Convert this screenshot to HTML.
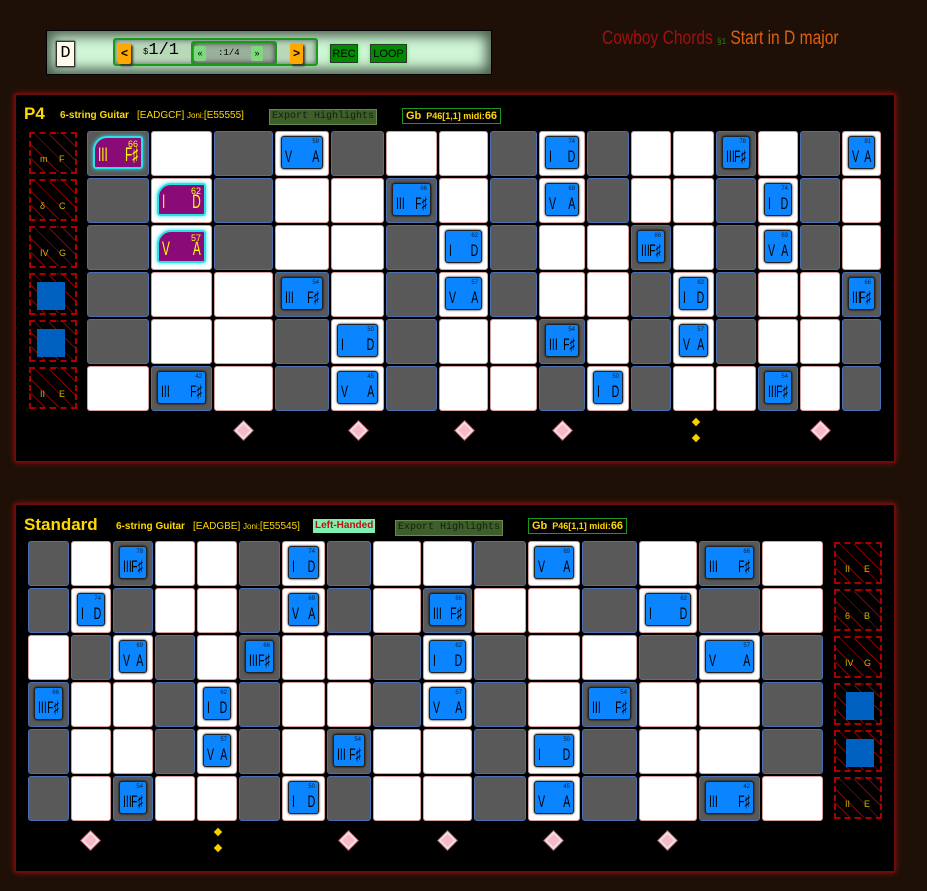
<!DOCTYPE html>
<html><head><meta charset="utf-8"><style>
body{margin:0;width:927px;height:891px;background:#1e1006;position:relative;overflow:hidden;font-family:"Liberation Sans",sans-serif}
.abs{position:absolute}
.bar{left:46px;top:30px;width:446px;height:45px;background:#cff5d6;box-shadow:inset 0 0 12px 5px #4a5e4c;border:1px solid #000;box-sizing:border-box}
.panel{position:absolute;left:14px;width:882px;height:370px;background:#000;border:2px solid #6a0c0c;box-sizing:border-box;border-radius:3px;box-shadow:0 0 6px #8a1010}
.grid{position:absolute;display:grid;grid-auto-rows:47px}
.c{margin:1px;border-radius:3px;position:relative;box-sizing:border-box}
.g{background:#595959;border:1px solid #4a6fb0}
.w{background:#fff;border:1px solid #d9a0a0}
.k{position:absolute;left:5px;right:5px;top:4px;bottom:6px;background:#0a84ff;border:1px solid #222;border-radius:3px;box-shadow:0 0 2px #000;color:#000}
.k b{position:absolute;right:3px;top:2px;font-size:6px;font-weight:normal;color:#123}
.k span{position:absolute;bottom:3px;font-size:17px;line-height:17px;transform:scaleX(0.62)}
.k span:first-of-type{left:3px;transform-origin:left bottom}.k span:last-of-type{right:3px;transform-origin:right bottom}
.p{background:#8a0a78;border:2px solid #2ce0e8;border-top-left-radius:14px;box-shadow:0 0 4px #2ce0e8;color:#ff0}
.p b{color:#ff0;font-size:9px;top:1px}.p span{font-size:19px;line-height:19px;bottom:2px}
.lab{position:absolute;width:48px;height:42px;box-sizing:border-box;border:2px dashed #a00;background:repeating-linear-gradient(45deg,#000 0 9px,#8a0000 9px 10px);font-size:9px;color:#c8b400}
.lab .a{position:absolute;left:9px;bottom:8px}.lab .b{position:absolute;left:28px;bottom:8px}
.lab .bl{position:absolute;left:6px;top:7px;width:28px;height:28px;background:#0060c0;color:#113}
.dm{position:absolute;width:9px;height:9px;background:#f8b8c8;border:2px solid #f0e0e0;transform:rotate(45deg);box-shadow:0 0 0 1px #a05060}
.yd{position:absolute;width:6px;height:6px;background:#f8d000;transform:rotate(45deg)}
.h{position:absolute;color:#ffd800;font-weight:bold;font-size:11px}
.exp{position:absolute;background:#3e5e2a;border:1px solid #6a8a4a;font-family:"Liberation Mono",monospace;font-size:10px;color:#102010;height:14px;line-height:14px;padding:0 2px}
.gb{position:absolute;border:1px solid #1a9a1a;color:#ffd800;font-weight:bold;font-size:9px;height:14px;line-height:14px;padding:0 3px}
</style></head><body>

<div class="abs bar"></div>
<div class="abs" style="left:56px;top:41px;width:17px;height:24px;background:#fffbe8;border:1px solid #333;box-shadow:0 0 2px #000;font-family:'Liberation Mono',monospace;font-size:17px;line-height:24px;text-align:center">D</div>
<div class="abs" style="left:113px;top:38px;width:205px;height:28px;background:#b8d8b8;border:2px solid #1a9a1a;border-radius:3px;box-sizing:border-box;box-shadow:inset 0 0 6px #556"></div>
<div class="abs" style="left:118px;top:43px;width:13px;height:21px;background:#ffa800;border-radius:2px;font-size:12px;font-weight:bold;text-align:center;line-height:20px;box-shadow:2px 2px 2px #333">&lt;</div>
<div class="abs" style="left:143px;top:41px;font-family:'Liberation Mono',monospace;font-size:17px"><span style="font-size:9px">$</span>1/1</div>
<div class="abs" style="left:191px;top:41px;width:86px;height:24px;background:#9ab09a;border:2px solid #1a9a1a;border-radius:3px;box-sizing:border-box;box-shadow:inset 0 0 6px #333"></div>
<div class="abs" style="left:194px;top:46px;width:12px;height:15px;background:#7ed87e;border-radius:2px;font-size:9px;text-align:center;line-height:15px">«</div>
<div class="abs" style="left:218px;top:48px;font-family:'Liberation Mono',monospace;font-size:9px">:1/4</div>
<div class="abs" style="left:251px;top:46px;width:12px;height:15px;background:#7ed87e;border-radius:2px;font-size:9px;text-align:center;line-height:15px">»</div>
<div class="abs" style="left:290px;top:43px;width:13px;height:21px;background:#ffa800;border-radius:2px;font-size:12px;font-weight:bold;text-align:center;line-height:20px;box-shadow:2px 2px 2px #333">&gt;</div>
<div class="abs" style="left:330px;top:44px;width:28px;height:19px;background:#008a00;border:1px solid #333;box-shadow:0 0 4px #4f4;font-size:11px;text-align:center;line-height:19px;box-sizing:border-box">REC</div>
<div class="abs" style="left:370px;top:44px;width:37px;height:19px;background:#008a00;border:1px solid #333;box-shadow:0 0 4px #4f4;font-size:11px;text-align:center;line-height:19px;box-sizing:border-box">LOOP</div>

<div class="abs" style="left:602px;top:28px;font-size:19px;color:#a01010;transform:scaleX(0.82);transform-origin:left;white-space:nowrap">Cowboy Chords <span style="font-size:9px;color:#3a7a20;font-family:'Liberation Mono',monospace">§1</span> <span style="color:#e06010">Start in D major</span></div>

<!-- P4 PANEL -->
<div class="panel" style="top:93px"></div>
<div class="h" style="left:24px;top:104px;font-size:17px">P4</div>
<div class="h" style="left:60px;top:110px;font-size:10px">6-string Guitar</div>
<div class="h" style="left:137px;top:110px;font-size:10px;font-weight:normal;color:#ffd800">[EADGCF] <span style="font-size:8px">Joni:</span>[E55555]</div>
<div class="exp" style="left:269px;top:109px">Export Highlights</div>
<div class="gb" style="left:402px;top:108px"><span style="font-size:11px">Gb</span> &nbsp;P46[1,1] midi:<span style="font-size:11px">66</span></div>

<div class="lab" style="left:29px;top:132px"><span class="a">m</span><span class="b">F</span></div>
<div class="lab" style="left:29px;top:179px"><span class="a">δ</span><span class="b">C</span></div>
<div class="lab" style="left:29px;top:226px"><span class="a">IV</span><span class="b">G</span></div>
<div class="lab" style="left:29px;top:273px"><div class="bl"></div></div>
<div class="lab" style="left:29px;top:320px"><div class="bl"></div></div>
<div class="lab" style="left:29px;top:367px"><span class="a">II</span><span class="b">E</span></div>

<div class="grid" style="left:86px;top:130px;grid-template-columns:64px 63px 61px 56px 55px 53px 51px 49px 48px 44px 42px 43px 42px 42px 42px 41px">
<div class="c g"><div class="k p"><b>66</b><span>III</span><span>F♯</span></div></div><div class="c w"></div><div class="c g"></div><div class="c w"><div class="k"><b>59</b><span>V</span><span>A</span></div></div><div class="c g"></div><div class="c w"></div><div class="c w"></div><div class="c g"></div><div class="c w"><div class="k"><b>74</b><span>I</span><span>D</span></div></div><div class="c g"></div><div class="c w"></div><div class="c w"></div><div class="c g"><div class="k"><b>78</b><span>III</span><span>F♯</span></div></div><div class="c w"></div><div class="c g"></div><div class="c w"><div class="k"><b>81</b><span>V</span><span>A</span></div></div>
<div class="c g"></div><div class="c w"><div class="k p"><b>62</b><span>I</span><span>D</span></div></div><div class="c g"></div><div class="c w"></div><div class="c w"></div><div class="c g"><div class="k"><b>66</b><span>III</span><span>F♯</span></div></div><div class="c w"></div><div class="c g"></div><div class="c w"><div class="k"><b>69</b><span>V</span><span>A</span></div></div><div class="c g"></div><div class="c w"></div><div class="c w"></div><div class="c g"></div><div class="c w"><div class="k"><b>74</b><span>I</span><span>D</span></div></div><div class="c g"></div><div class="c w"></div>
<div class="c g"></div><div class="c w"><div class="k p"><b>57</b><span>V</span><span>A</span></div></div><div class="c g"></div><div class="c w"></div><div class="c w"></div><div class="c g"></div><div class="c w"><div class="k"><b>62</b><span>I</span><span>D</span></div></div><div class="c g"></div><div class="c w"></div><div class="c w"></div><div class="c g"><div class="k"><b>66</b><span>III</span><span>F♯</span></div></div><div class="c w"></div><div class="c g"></div><div class="c w"><div class="k"><b>69</b><span>V</span><span>A</span></div></div><div class="c g"></div><div class="c w"></div>
<div class="c g"></div><div class="c w"></div><div class="c w"></div><div class="c g"><div class="k"><b>54</b><span>III</span><span>F♯</span></div></div><div class="c w"></div><div class="c g"></div><div class="c w"><div class="k"><b>57</b><span>V</span><span>A</span></div></div><div class="c g"></div><div class="c w"></div><div class="c w"></div><div class="c g"></div><div class="c w"><div class="k"><b>62</b><span>I</span><span>D</span></div></div><div class="c g"></div><div class="c w"></div><div class="c w"></div><div class="c g"><div class="k"><b>66</b><span>III</span><span>F♯</span></div></div>
<div class="c g"></div><div class="c w"></div><div class="c w"></div><div class="c g"></div><div class="c w"><div class="k"><b>50</b><span>I</span><span>D</span></div></div><div class="c g"></div><div class="c w"></div><div class="c w"></div><div class="c g"><div class="k"><b>54</b><span>III</span><span>F♯</span></div></div><div class="c w"></div><div class="c g"></div><div class="c w"><div class="k"><b>57</b><span>V</span><span>A</span></div></div><div class="c g"></div><div class="c w"></div><div class="c w"></div><div class="c g"></div>
<div class="c w"></div><div class="c g"><div class="k"><b>42</b><span>III</span><span>F♯</span></div></div><div class="c w"></div><div class="c g"></div><div class="c w"><div class="k"><b>45</b><span>V</span><span>A</span></div></div><div class="c g"></div><div class="c w"></div><div class="c w"></div><div class="c g"></div><div class="c w"><div class="k"><b>50</b><span>I</span><span>D</span></div></div><div class="c g"></div><div class="c w"></div><div class="c w"></div><div class="c g"><div class="k"><b>54</b><span>III</span><span>F♯</span></div></div><div class="c w"></div><div class="c g"></div>
</div>
<div class="dm" style="left:237px;top:424px"></div><div class="dm" style="left:352px;top:424px"></div><div class="dm" style="left:458px;top:424px"></div><div class="dm" style="left:556px;top:424px"></div><div class="dm" style="left:814px;top:424px"></div>
<div class="yd" style="left:693px;top:419px"></div><div class="yd" style="left:693px;top:435px"></div>

<!-- STANDARD PANEL -->
<div class="panel" style="top:503px"></div>
<div class="h" style="left:24px;top:515px;font-size:17px">Standard</div>
<div class="h" style="left:116px;top:521px;font-size:10px">6-string Guitar</div>
<div class="h" style="left:193px;top:521px;font-size:10px;font-weight:normal">[EADGBE] <span style="font-size:8px">Joni:</span>[E55545]</div>
<div class="abs" style="left:313px;top:519px;background:#7ef0b0;color:#c01010;font-size:10px;font-weight:bold;padding:0 2px;height:14px;line-height:14px">Left-Handed</div>
<div class="exp" style="left:395px;top:520px">Export Highlights</div>
<div class="gb" style="left:528px;top:518px"><span style="font-size:11px">Gb</span> &nbsp;P46[1,1] midi:<span style="font-size:11px">66</span></div>

<div class="grid" style="left:27px;top:540px;grid-template-columns:43px 42px 42px 42px 42px 43px 45px 46px 50px 51px 54px 54px 57px 60px 63px 63px">
<div class="c g"></div><div class="c w"></div><div class="c g"><div class="k"><b>78</b><span>III</span><span>F♯</span></div></div><div class="c w"></div><div class="c w"></div><div class="c g"></div><div class="c w"><div class="k"><b>74</b><span>I</span><span>D</span></div></div><div class="c g"></div><div class="c w"></div><div class="c w"></div><div class="c g"></div><div class="c w"><div class="k"><b>69</b><span>V</span><span>A</span></div></div><div class="c g"></div><div class="c w"></div><div class="c g"><div class="k"><b>66</b><span>III</span><span>F♯</span></div></div><div class="c w"></div>
<div class="c g"></div><div class="c w"><div class="k"><b>74</b><span>I</span><span>D</span></div></div><div class="c g"></div><div class="c w"></div><div class="c w"></div><div class="c g"></div><div class="c w"><div class="k"><b>69</b><span>V</span><span>A</span></div></div><div class="c g"></div><div class="c w"></div><div class="c g"><div class="k"><b>66</b><span>III</span><span>F♯</span></div></div><div class="c w"></div><div class="c w"></div><div class="c g"></div><div class="c w"><div class="k"><b>62</b><span>I</span><span>D</span></div></div><div class="c g"></div><div class="c w"></div>
<div class="c w"></div><div class="c g"></div><div class="c w"><div class="k"><b>69</b><span>V</span><span>A</span></div></div><div class="c g"></div><div class="c w"></div><div class="c g"><div class="k"><b>66</b><span>III</span><span>F♯</span></div></div><div class="c w"></div><div class="c w"></div><div class="c g"></div><div class="c w"><div class="k"><b>62</b><span>I</span><span>D</span></div></div><div class="c g"></div><div class="c w"></div><div class="c w"></div><div class="c g"></div><div class="c w"><div class="k"><b>57</b><span>V</span><span>A</span></div></div><div class="c g"></div>
<div class="c g"><div class="k"><b>66</b><span>III</span><span>F♯</span></div></div><div class="c w"></div><div class="c w"></div><div class="c g"></div><div class="c w"><div class="k"><b>62</b><span>I</span><span>D</span></div></div><div class="c g"></div><div class="c w"></div><div class="c w"></div><div class="c g"></div><div class="c w"><div class="k"><b>57</b><span>V</span><span>A</span></div></div><div class="c g"></div><div class="c w"></div><div class="c g"><div class="k"><b>54</b><span>III</span><span>F♯</span></div></div><div class="c w"></div><div class="c w"></div><div class="c g"></div>
<div class="c g"></div><div class="c w"></div><div class="c w"></div><div class="c g"></div><div class="c w"><div class="k"><b>57</b><span>V</span><span>A</span></div></div><div class="c g"></div><div class="c w"></div><div class="c g"><div class="k"><b>54</b><span>III</span><span>F♯</span></div></div><div class="c w"></div><div class="c w"></div><div class="c g"></div><div class="c w"><div class="k"><b>50</b><span>I</span><span>D</span></div></div><div class="c g"></div><div class="c w"></div><div class="c w"></div><div class="c g"></div>
<div class="c g"></div><div class="c w"></div><div class="c g"><div class="k"><b>54</b><span>III</span><span>F♯</span></div></div><div class="c w"></div><div class="c w"></div><div class="c g"></div><div class="c w"><div class="k"><b>50</b><span>I</span><span>D</span></div></div><div class="c g"></div><div class="c w"></div><div class="c w"></div><div class="c g"></div><div class="c w"><div class="k"><b>45</b><span>V</span><span>A</span></div></div><div class="c g"></div><div class="c w"></div><div class="c g"><div class="k"><b>42</b><span>III</span><span>F♯</span></div></div><div class="c w"></div>
</div>

<div class="lab" style="left:834px;top:542px"><span class="a">II</span><span class="b">E</span></div>
<div class="lab" style="left:834px;top:589px"><span class="a">6</span><span class="b">B</span></div>
<div class="lab" style="left:834px;top:636px"><span class="a">IV</span><span class="b">G</span></div>
<div class="lab" style="left:834px;top:683px"><div class="bl" style="left:10px"></div></div>
<div class="lab" style="left:834px;top:730px"><div class="bl" style="left:10px"></div></div>
<div class="lab" style="left:834px;top:777px"><span class="a">II</span><span class="b">E</span></div>

<div class="dm" style="left:84px;top:834px"></div><div class="dm" style="left:342px;top:834px"></div><div class="dm" style="left:441px;top:834px"></div><div class="dm" style="left:547px;top:834px"></div><div class="dm" style="left:661px;top:834px"></div>
<div class="yd" style="left:215px;top:829px"></div><div class="yd" style="left:215px;top:845px"></div>
</body></html>
